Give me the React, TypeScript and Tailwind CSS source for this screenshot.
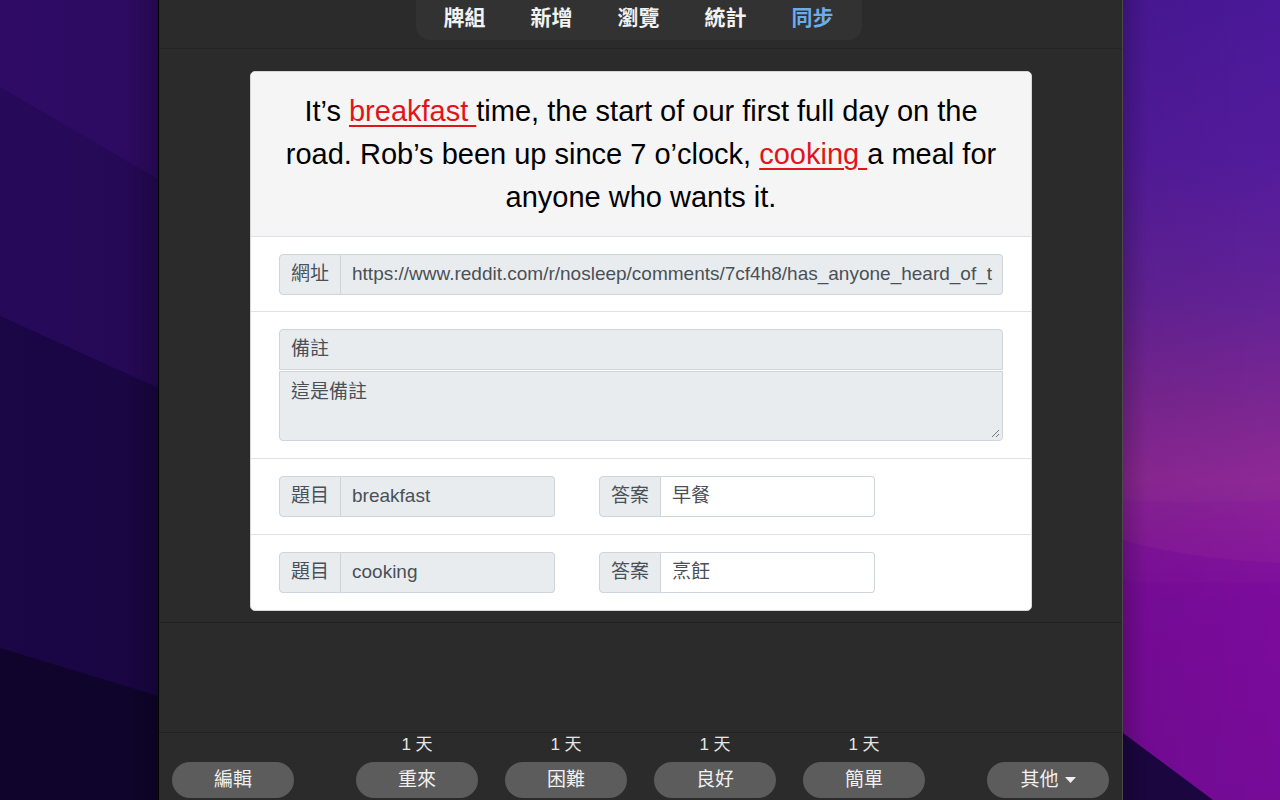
import { useState } from "react";

const tabs = ["牌組", "新增", "瀏覽", "統計", "同步"];

const answers = [
  { label: "重來", days: "1 天" },
  { label: "困難", days: "1 天" },
  { label: "良好", days: "1 天" },
  { label: "簡單", days: "1 天" },
];

const font = "font-['Liberation_Sans','Noto_Sans_CJK_TC',sans-serif]";

const LeftWallpaper = () => (
  <svg width="158" height="800" viewBox="0 0 158 800" className="block">
    <defs>
      <linearGradient id="lw" x1="0" y1="0" x2="1" y2="0">
        <stop offset="0" stopColor="#000" stopOpacity="0" />
        <stop offset="0.8" stopColor="#000" stopOpacity="0.05" />
        <stop offset="1" stopColor="#000" stopOpacity="0.25" />
      </linearGradient>
    </defs>
    <rect width="158" height="800" fill="#2f0b66" />
    <polygon points="0,87 158,179 158,800 0,800" fill="#27095a" />
    <polygon points="0,316 158,388 158,800 0,800" fill="#1b0646" />
    <polygon points="0,648 158,696 158,800 0,800" fill="#10042d" />
    <rect width="158" height="800" fill="url(#lw)" />
  </svg>
);

const RightWallpaper = () => (
  <svg width="157" height="800" viewBox="0 0 157 800" className="block">
    <defs>
      <linearGradient id="rw" x1="0" y1="0" x2="0" y2="1">
        <stop offset="0" stopColor="#4a1898" />
        <stop offset="0.2" stopColor="#531b9c" />
        <stop offset="0.375" stopColor="#632296" />
        <stop offset="0.5" stopColor="#7a2692" />
        <stop offset="0.6" stopColor="#8e2896" />
        <stop offset="0.625" stopColor="#8c2598" />
        <stop offset="0.7" stopColor="#86179c" />
        <stop offset="0.75" stopColor="#7c0a9e" />
        <stop offset="0.88" stopColor="#730895" />
        <stop offset="1" stopColor="#6a0890" />
      </linearGradient>
      <linearGradient id="re" x1="0" y1="0" x2="1" y2="0">
        <stop offset="0" stopColor="#000" stopOpacity="0.22" />
        <stop offset="0.15" stopColor="#000" stopOpacity="0.05" />
        <stop offset="1" stopColor="#000" stopOpacity="0" />
      </linearGradient>
    </defs>
    <rect width="157" height="800" fill="url(#rw)" />
    <path d="M0,500 Q70,504 157,500 L157,800 L0,800 Z" fill="#861a9c" opacity="0.35" />
    <path d="M0,540 Q70,560 157,563 L157,800 L0,800 Z" fill="#7a0b9e" opacity="0.45" />
    <path d="M0,580 Q70,586 157,582 L157,800 L0,800 Z" fill="#780a9c" opacity="0.3" />
    <polygon points="0,733 90,800 0,800" fill="#1c0642" />
    <rect width="157" height="800" fill="url(#re)" />
  </svg>
);

const Addon = ({ children }: { children: React.ReactNode }) => (
  <span className="flex items-center px-[11px] bg-[#e9ecef] border border-[#ced4da] rounded-l-[4px] text-[#495057] text-[19px] whitespace-nowrap">
    {children}
  </span>
);

const PairRow = ({ word, answer }: { word: string; answer: string }) => (
  <div className="flex gap-[44px] px-[28px] py-[17px] border-t border-[#dee2e6]">
    <div className="flex w-[276px] h-[41px]">
      <Addon>題目</Addon>
      <div className="flex-1 flex items-center px-[11px] bg-[#e9ecef] border border-l-0 border-[#ced4da] rounded-r-[4px] text-[#495057] text-[19px]">
        {word}
      </div>
    </div>
    <div className="flex w-[276px] h-[41px]">
      <Addon>答案</Addon>
      <div className="flex-1 flex items-center px-[11px] bg-white border border-l-0 border-[#ced4da] rounded-r-[4px] text-[#495057] text-[19px]">
        {answer}
      </div>
    </div>
  </div>
);

export default function App() {
  const [tab, setTab] = useState(4);

  return (
    <div className={`flex h-[800px] w-[1280px] overflow-hidden ${font}`}>
      <LeftWallpaper />

      <div className="flex flex-col w-[965px] bg-[#2b2b2b] border-l border-black border-r border-r-[#4a4a4a]">
        {/* top tabs */}
        <div className="h-[49px] flex justify-center border-b border-[#242424]">
          <div className="w-[446px] h-[40px] -ml-[4px] flex items-center justify-between px-[28px] bg-[#323232] rounded-b-[14px]">
            {tabs.map((t, i) => (
              <button
                key={t}
                onClick={() => setTab(i)}
                className={`text-[21px] font-bold leading-none pb-[6px] ${i === tab ? "text-[#6cacea]" : "text-[#f2f2f2]"}`}
              >
                {t}
              </button>
            ))}
          </div>
        </div>

        {/* card area */}
        <div className="flex-1 flex flex-col">
          <div className="pt-[22px] pb-[11px] px-[91px] border-b border-[#222]">
            <div className="w-[782px] bg-white rounded-[5px] border border-[#d6d6d6] overflow-hidden">
              <div className="bg-[#f5f5f5] pt-[18px] pb-[17px] px-[10px] text-center text-[29px] leading-[43px] text-black">
                It’s <span className="text-[#e2141b] underline decoration-[2px] underline-offset-[4px]">breakfast </span>time, the start of our first full day on the
                <br />
                road. Rob’s been up since 7 o’clock, <span className="text-[#e2141b] underline decoration-[2px] underline-offset-[4px]">cooking </span>a meal for
                <br />
                anyone who wants it.
              </div>

              <div className="px-[28px] pt-[17px] pb-[16px] border-t border-[#dee2e6]">
                <div className="flex h-[41px]">
                  <Addon>網址</Addon>
                  <div className="flex-1 min-w-0 flex items-center px-[11px] bg-[#e9ecef] border border-l-0 border-[#ced4da] rounded-r-[4px] text-[#495057] text-[19px] overflow-hidden whitespace-nowrap">
                    https://www.reddit.com/r/nosleep/comments/7cf4h8/has_anyone_heard_of_t
                  </div>
                </div>
              </div>

              <div className="px-[28px] py-[17px] border-t border-[#dee2e6]">
                <div className="h-[41px] flex items-center px-[11px] bg-[#e9ecef] border border-[#ced4da] rounded-t-[4px] text-[#495057] text-[19px]">
                  備註
                </div>
                <div className="relative h-[70px] mt-[1px] px-[11px] py-[6px] bg-[#e9ecef] border border-[#ced4da] rounded-b-[4px] text-[#495057] text-[19px]">
                  這是備註
                  <svg width="10" height="10" viewBox="0 0 10 10" className="absolute right-[2px] bottom-[2px]">
                    <path d="M9 2 L2 9 M9 6 L6 9" stroke="#777" strokeWidth="1" />
                  </svg>
                </div>
              </div>

              <PairRow word="breakfast" answer="早餐" />
              <PairRow word="cooking" answer="烹飪" />
            </div>
          </div>
        </div>

        {/* bottom bar */}
        <div className="h-[68px] border-t border-[#222] flex items-end pb-[2px] px-[13px]">
          <button className="w-[122px] h-[36px] rounded-full bg-[#5c5c5c] text-[#f0f0f0] text-[19px]">編輯</button>
          <div className="flex gap-[27px] ml-[62px]">
            {answers.map((a) => (
              <div key={a.label} className="flex flex-col items-center">
                <span className="text-[17px] leading-none text-[#e6e6e6] mb-[9px]">{a.days}</span>
                <button className="w-[122px] h-[36px] rounded-full bg-[#5c5c5c] text-[#f0f0f0] text-[19px]">{a.label}</button>
              </div>
            ))}
          </div>
          <button className="ml-auto w-[122px] h-[36px] rounded-full bg-[#5c5c5c] text-[#f0f0f0] text-[19px] flex items-center justify-center gap-[6px]">
            其他
            <svg width="11" height="6" viewBox="0 0 11 6">
              <path d="M0 0 H11 L5.5 6 Z" fill="#f0f0f0" />
            </svg>
          </button>
        </div>
      </div>

      <RightWallpaper />
    </div>
  );
}
